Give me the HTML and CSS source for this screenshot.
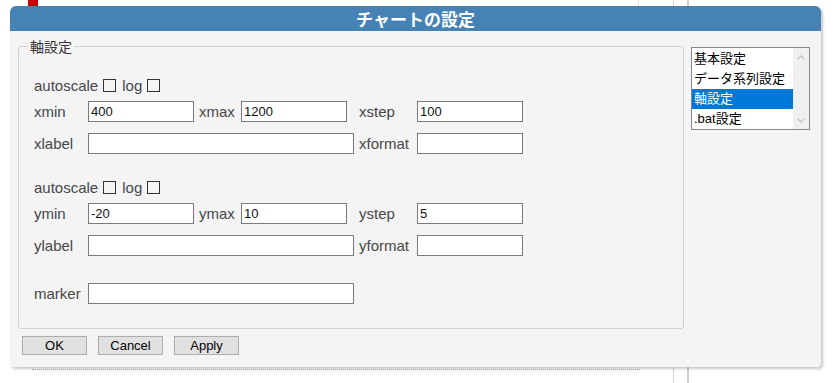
FILE: index.html
```html
<!DOCTYPE html>
<html lang="ja">
<head>
  <meta charset="UTF-8" />
  <meta name="viewport" content="width=device-width, initial-scale=1.0"/>
  <title>チャートの設定</title>
  <link rel="stylesheet" href="styles.css">
</head>
<body>

  <!-- page behind the dialog -->
  <div class="backdrop">
    <div class="mark"></div>
    <div class="vline vline-a"></div>
    <div class="vline vline-b"></div>
    <div class="vline vline-c"></div>
    <div class="dotline"></div>
  </div>

  <div class="dialog">
    <div class="titlebar">チャートの設定</div>

    <div class="dialog-body">
      <fieldset class="axis">
        <legend>軸設定</legend>

        <div class="row row-check">
          <span>autoscale</span><input type="checkbox"><span>log</span><input type="checkbox">
        </div>
        <div class="row gap-s">
          <label class="lbl-a">xmin</label><input type="text" value="400">
          <label class="lbl-b">xmax</label><input type="text" value="1200">
          <label class="lbl-c">xstep</label><input type="text" value="100">
        </div>
        <div class="row gap-m">
          <label class="lbl-a">xlabel</label><input type="text" class="wide" value="">
          <label class="lbl-d">xformat</label><input type="text" value="">
        </div>

        <div class="row row-check gap-l">
          <span>autoscale</span><input type="checkbox"><span>log</span><input type="checkbox">
        </div>
        <div class="row gap-s">
          <label class="lbl-a">ymin</label><input type="text" value="-20">
          <label class="lbl-b">ymax</label><input type="text" value="10">
          <label class="lbl-c">ystep</label><input type="text" value="5">
        </div>
        <div class="row gap-m">
          <label class="lbl-a">ylabel</label><input type="text" class="wide" value="">
          <label class="lbl-d">yformat</label><input type="text" value="">
        </div>

        <div class="row gap-xl">
          <label class="lbl-a">marker</label><input type="text" class="wide" value="">
        </div>
      </fieldset>

      <div class="listbox">
        <ul class="items">
          <li>基本設定</li>
          <li>データ系列設定</li>
          <li class="selected">軸設定</li>
          <li>.bat設定</li>
        </ul>
        <div class="scrollbar">
          <svg width="16" height="10" viewBox="0 0 16 10"><polyline points="4.5,6.5 8,3 11.5,6.5" fill="none" stroke="#c4c4c4" stroke-width="1.3"/></svg>
          <svg width="16" height="10" viewBox="0 0 16 10"><polyline points="4.5,3.5 8,7 11.5,3.5" fill="none" stroke="#c4c4c4" stroke-width="1.3"/></svg>
        </div>
      </div>
    </div>

    <div class="buttons">
      <button>OK</button>
      <button>Cancel</button>
      <button>Apply</button>
    </div>
  </div>

</body>
</html>
```

FILE: styles.css
```css
body {
  margin: 0;
  width: 835px;
  height: 383px;
  overflow: hidden;
  background-color: #ffffff;
  font-family: "Liberation Sans", "Noto Sans CJK JP", sans-serif;
  position: relative;
}
.backdrop .mark {
  position: absolute;
  left: 28px;
  top: 0;
  width: 10px;
  height: 6px;
  background-color: #c80000;
}
.vline {
  position: absolute;
  top: 0;
  height: 383px;
  width: 1px;
  background-color: #d6d6d6;
}
.vline-a { left: 638px; height: 6px; background-color: #e4e4e4; }
.vline-b { left: 673px; }
.vline-c { left: 687px; width: 2px; background-color: #d0d0d0; }
.dotline {
  position: absolute;
  left: 32px;
  top: 369px;
  width: 608px;
  border-top: 1px dotted #c2a9a9;
  box-shadow: 0 2px 3px rgba(0, 0, 0, 0.08);
}

.dialog {
  position: absolute;
  left: 10px;
  top: 6px;
  width: 811px;
  height: 361px;
  background-color: #f4f4f4;
  border-radius: 6px 6px 4px 4px;
  box-shadow: 2px 2px 3px rgba(0, 0, 0, 0.22);
}
.titlebar {
  height: 25px;
  line-height: 25px;
  background-color: #4682b4;
  color: #ffffff;
  font-family: "Noto Sans CJK JP", sans-serif;
  font-weight: bold;
  font-size: 17px;
  text-align: center;
  border-radius: 6px 6px 0 0;
}
.dialog-body {
  display: flex;
  align-items: flex-start;
  gap: 7px;
  padding: 5px 0 0 8px;
}

.axis {
  box-sizing: border-box;
  width: 666px;
  height: 293px;
  margin: 0;
  padding: 0 0 0 15px;
  min-width: 0;
  border: 1px solid #d2d2d2;
  border-radius: 3px;
}
.axis legend {
  margin-left: -6px;
  padding: 0 2px;
  line-height: 20px;
  font-family: "Noto Sans CJK JP", sans-serif;
  font-size: 14px;
  color: #333333;
}
.row {
  display: flex;
  align-items: center;
  height: 21px;
  font-size: 15px;
  color: #474747;
}
.row-check { margin-top: 19px; }
.gap-s { margin-top: 5px; }
.gap-m { margin-top: 11px; }
.gap-l { margin-top: 23px; }
.gap-xl { margin-top: 27px; }

.row input[type="checkbox"] {
  appearance: none;
  width: 13px;
  height: 13px;
  margin: 0 6px 0 5px;
  border: 1px solid #333333;
  background: transparent;
}
.row input[type="text"] {
  box-sizing: border-box;
  width: 106px;
  height: 21px;
  margin: 0;
  padding: 0 2px;
  border: 1px solid #7a7a7a;
  background-color: #ffffff;
  font-family: "Liberation Sans", sans-serif;
  font-size: 13px;
  color: #111111;
}
.row input.wide { width: 266px; }
.lbl-a { width: 54px; }
.lbl-b { width: 42px; padding-left: 5px; }
.lbl-c { width: 58px; padding-left: 12px; }
.lbl-d { width: 58px; padding-left: 5px; }

.listbox {
  display: flex;
  box-sizing: border-box;
  width: 119px;
  height: 83px;
  margin-top: 11px;
  border: 1px solid #848890;
  background-color: #ffffff;
}
.items {
  flex: 1;
  list-style: none;
  margin: 0;
  padding: 1px 0 0 0;
}
.items li {
  height: 20px;
  line-height: 20px;
  padding-left: 2px;
  font-family: "Liberation Sans", "Noto Sans CJK JP", sans-serif;
  font-size: 13px;
  color: #000000;
  white-space: nowrap;
}
.items li.selected {
  background-color: #0078d7;
  color: #ffffff;
}
.scrollbar {
  width: 16px;
  display: flex;
  flex-direction: column;
  justify-content: space-between;
  padding: 5px 0 4px;
  box-sizing: border-box;
  background-color: #f0f0f0;
}

.buttons {
  display: flex;
  gap: 11px;
  margin-top: 7px;
  padding-left: 12px;
}
.buttons button {
  width: 65px;
  height: 19px;
  padding: 0;
  border: 1px solid #adadad;
  border-radius: 0;
  background-color: #e1e1e1;
  font-family: "Liberation Sans", sans-serif;
  font-size: 13px;
  color: #000000;
}
```
